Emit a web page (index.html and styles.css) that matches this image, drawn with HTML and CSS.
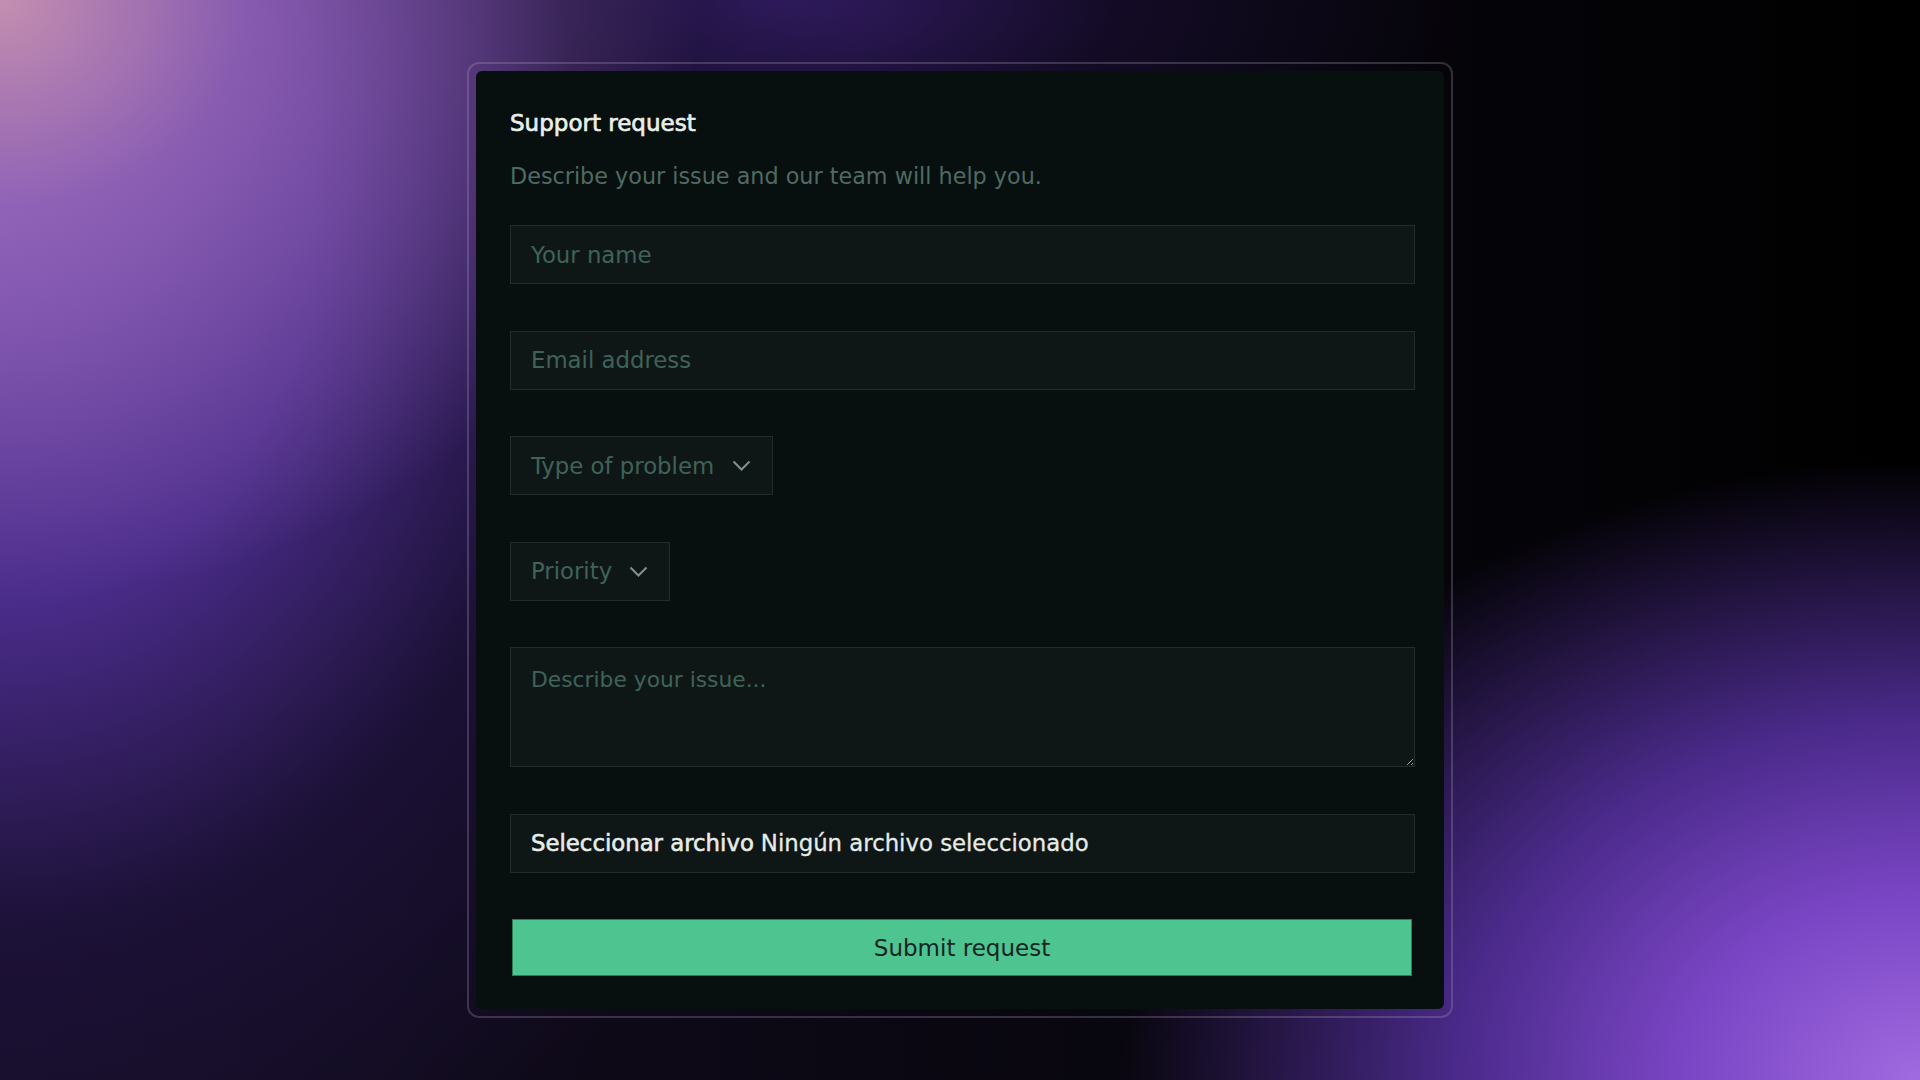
FILE: index.html
```html
<!DOCTYPE html>
<html lang="en">
<head>
    <meta charset="UTF-8">
    <meta name="viewport" content="width=device-width, initial-scale=1.0">
    <title>Support request</title>
    <link rel="stylesheet" href="styles.css">
</head>
<body>
    <div class="frame">
        <div class="support-card">
            <h1>Support request</h1>
            <p class="lead">Describe your issue and our team will help you.</p>
            <form id="support-form" class="support-form">
                <input type="text" class="field" placeholder="Your name">
                <input type="email" class="field" placeholder="Email address">

                <div class="select-wrap">
                    <select class="select" id="problem-type">
                        <option value="">Type of problem</option>
                        <option>Billing</option>
                        <option>Technical</option>
                        <option>Account</option>
                    </select>
                    <svg class="chevron" viewBox="0 0 19 11"><path d="M1.5 1.5 L9.5 9.5 L17.5 1.5" /></svg>
                </div>

                <div class="select-wrap">
                    <select class="select" id="priority">
                        <option value="">Priority</option>
                        <option>Low</option>
                        <option>Medium</option>
                        <option>High</option>
                    </select>
                    <svg class="chevron" viewBox="0 0 19 11"><path d="M1.5 1.5 L9.5 9.5 L17.5 1.5" /></svg>
                </div>

                <textarea class="field area" placeholder="Describe your issue..."></textarea>

                <label class="field file-field">
                    <input type="file" id="attachment">
                    <span class="file-btn">Seleccionar archivo</span>
                    <span class="file-name" id="file-name">Ningún archivo seleccionado</span>
                </label>

                <button type="submit" class="submit">Submit request</button>
            </form>
        </div>
    </div>

    <script>
        document.getElementById('attachment').addEventListener('change', function() {
            const name = this.files.length ? this.files[0].name : 'Ningún archivo seleccionado';
            document.getElementById('file-name').textContent = name;
        });

        document.getElementById('support-form').addEventListener('submit', function(e) {
            e.preventDefault();
        });
    </script>
</body>
</html>
```

FILE: styles.css
```css
body {
    font-family: "DejaVu Sans", Verdana, sans-serif;
    margin: 0;
    height: 100vh;
    display: flex;
    justify-content: center;
    align-items: center;
    background-color: #000;
    background-image:
        radial-gradient(ellipse 700px 600px at 0% 0%, #c48fb0 0%, rgba(160, 110, 190, 0.7) 35%, rgba(90, 50, 160, 0) 100%),
        radial-gradient(ellipse 900px 1100px at 0% 20%, #6a45a8 0%, #4a2c8a 35%, rgba(30, 18, 60, 0.8) 65%, rgba(0, 0, 0, 0) 100%),
        radial-gradient(ellipse 700px 260px at 40% 0%, rgba(55, 30, 110, 0.9) 0%, rgba(30, 16, 60, 0.5) 50%, rgba(0, 0, 0, 0) 100%),
        radial-gradient(ellipse 800px 620px at 100% 100%, #a06ae0 0%, #7a45c4 30%, #4a2a8a 58%, rgba(20, 10, 40, 0) 100%),
        linear-gradient(90deg, #140d22 0%, #08060e 60%, #000 100%);
}

.frame {
    padding: 7px;
    border: 2px solid rgba(170, 160, 190, 0.28);
    border-radius: 12px;
}

.support-card {
    width: 968px;
    height: 938px;
    box-sizing: border-box;
    padding: 38px 29px 32px 34px;
    background-color: #080f0f;
    border-radius: 6px;
}

h1 {
    font-size: 23px;
    font-weight: 400;
    -webkit-text-stroke: 0.7px #e9efea;
    color: #e9efea;
    margin: 0 0 26px;
    line-height: 28px;
}

.lead {
    font-size: 22.3px;
    color: #4f6a63;
    margin: 0 0 36px;
    line-height: 26px;
}

.support-form {
    display: flex;
    flex-direction: column;
    align-items: flex-start;
    gap: 46.5px;
}

.field {
    width: 905px;
    height: 59px;
    box-sizing: border-box;
    padding: 0 20px;
    background-color: #0f1716;
    border: 1px solid #222d2b;
    color: #d8e2dd;
    font-family: inherit;
    font-size: 22.8px;
    outline: none;
}

.field::placeholder {
    color: #3f6259;
}

.select-wrap {
    position: relative;
    display: inline-block;
}

.select {
    height: 59px;
    box-sizing: border-box;
    padding: 0 50px 0 20px;
    background-color: #0f1716;
    border: 1px solid #222d2b;
    color: #3f6259;
    font-family: inherit;
    font-size: 22.8px;
    appearance: none;
    outline: none;
}

#problem-type {
    width: 263px;
}

#priority {
    width: 160px;
}

.chevron {
    position: absolute;
    right: 22px;
    top: 24px;
    width: 19px;
    height: 11px;
    fill: none;
    stroke: #7f928c;
    stroke-width: 2;
    pointer-events: none;
}

.area {
    height: 120px;
    padding: 19px 20px;
    font-size: 21.8px;
    resize: vertical;
}

.file-field {
    display: flex;
    align-items: center;
    gap: 7px;
    font-size: 22.8px;
    color: #e6ece8;
    cursor: pointer;
}

.file-field input {
    display: none;
}

.file-btn {
    -webkit-text-stroke: 0.6px #e6ece8;
}

.file-name {
    -webkit-text-stroke: 0.3px #e6ece8;
}

.submit {
    width: 900px;
    height: 57px;
    margin-left: 2px;
    background-color: #4ec591;
    border: 1px solid #2f7a5a;
    color: #162424;
    font-family: inherit;
    font-size: 23px;
    cursor: pointer;
}

.submit:hover {
    background-color: #46b885;
}
```
